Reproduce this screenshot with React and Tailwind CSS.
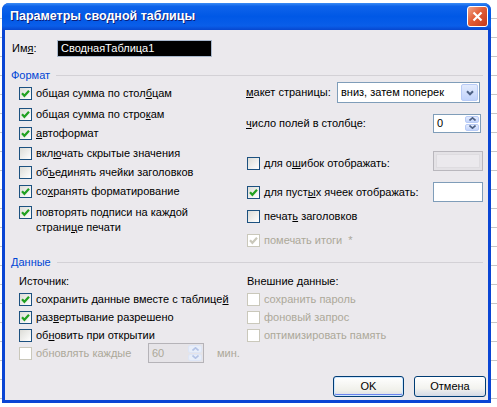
import React from "react";

function Box({ checked, disabled }) {
  return (
    <span
      className={`w-[13px] h-[13px] shrink-0 border flex items-center justify-center ${
        disabled
          ? "border-[#cac8bb] bg-white"
          : "border-[#1c5180] bg-[linear-gradient(135deg,#dcdcd7,#ffffff)]"
      }`}
    >
      {checked && (
        <svg width="9" height="9" viewBox="0 0 9 9">
          <path
            d="M1 4.2 L3.4 6.8 L8 1.8"
            fill="none"
            stroke={disabled ? "#cac8bb" : "#21a121"}
            strokeWidth="2.2"
          />
        </svg>
      )}
    </span>
  );
}

function Check({ checked, disabled, children, className = "" }) {
  return (
    <div className={`flex items-center ${className}`}>
      <Box checked={checked} disabled={disabled} />
      <span className={`ml-[4px] whitespace-nowrap ${disabled ? "text-[#aca899]" : ""}`}>
        {children}
      </span>
    </div>
  );
}

function Arrow({ up, pale }) {
  return (
    <svg width="7" height="4" viewBox="0 0 7 4">
      <path
        d={up ? "M0.5 3.5 L3.5 0.8 L6.5 3.5" : "M0.5 0.5 L3.5 3.2 L6.5 0.5"}
        fill="none"
        stroke={pale ? "#b4c3e6" : "#4d6185"}
        strokeWidth="1.6"
      />
    </svg>
  );
}

function SpinButtons({ pale }) {
  return (
    <div className="flex flex-col w-[15px] h-full gap-px py-px pr-px">
      {[true, false].map((up) => (
        <div
          key={String(up)}
          className={`flex-1 rounded-[2px] border flex items-center justify-center ${
            pale
              ? "border-[#dde5f6] bg-[#e8eef9]"
              : "border-[#b8cbf6] bg-[linear-gradient(#e3ebfd,#c3d4fb)]"
          }`}
        >
          <Arrow up={up} pale={pale} />
        </div>
      ))}
    </div>
  );
}

function Group({ title }) {
  return (
    <div className="flex items-center h-[14px] pl-[6px] pr-[5px]">
      <span className="text-[#0046d5]">{title}</span>
      <div className="flex-1 h-px bg-[#d3d1d6] ml-[6px]" />
    </div>
  );
}

export default function App() {
  return (
    <div
      className="w-[497px] h-[407px] overflow-hidden bg-white bg-[repeating-linear-gradient(to_bottom,transparent_0,transparent_18px,#c6c6c6_18px,#c6c6c6_19px)] pl-[2px] pt-[3px] text-[11px] text-black"
      style={{ fontFamily: '"Liberation Sans", Arial, sans-serif' }}
    >
      <div className="w-[489px] h-[400px] flex flex-col rounded-t-[7px] bg-[#0a45d4]">
        {/* Title bar */}
        <div className="h-[27px] shrink-0 rounded-t-[7px] bg-[linear-gradient(#3b8cf5_0%,#0e63ea_12%,#0058e6_50%,#0a5ee9_85%,#0747cf_100%)] flex items-center justify-between pl-[8px] pr-[3px]">
          <span className="text-white font-bold text-[12.5px] [text-shadow:1px_1px_0_#0a1e7a]">
            Параметры сводной таблицы
          </span>
          <div className="w-[21px] h-[21px] rounded-[3px] border border-white bg-[linear-gradient(135deg,#f0a78c,#e25d36_45%,#c4391a)] flex items-center justify-center">
            <svg width="11" height="11" viewBox="0 0 11 11">
              <path d="M1.5 1.5 L9.5 9.5 M9.5 1.5 L1.5 9.5" stroke="white" strokeWidth="2.2" />
            </svg>
          </div>
        </div>

        {/* Body */}
        <div className="flex-1 mx-[3px] mb-[3px] bg-[#ebe9ed] flex flex-col">
          <div className="flex items-center h-[17px] mt-[10px] pl-[7px]">
            <span className="w-[45px]">
              Им<u>я</u>:
            </span>
            <div className="w-[155px] h-[17px] border border-[#a9b8cc] bg-black text-white pl-[3px] flex items-center">
              СводнаяТаблица1
            </div>
          </div>

          <div className="mt-[11px]">
            <Group title="Формат" />
          </div>

          <div className="h-[173px] flex">
            <div className="w-[241px] pl-[14px] flex flex-col">
              <Check checked className="h-[22px]">
                общая сумма по стол<u>б</u>цам
              </Check>
              <Check checked className="h-[20px]">
                общая сумма по стро<u>к</u>ам
              </Check>
              <Check checked className="h-[19px]">
                <u>а</u>втоформат
              </Check>
              <Check className="h-[20px]">
                вкл<u>ю</u>чать скрытые значения
              </Check>
              <Check className="h-[18px]">
                об<u>ъ</u>единять ячейки заголовков
              </Check>
              <Check checked className="h-[20px]">
                со<u>х</u>ранять форматирование
              </Check>
              <div className="flex items-start pt-[5px]">
                <Box checked />
                <div className="ml-[4px] -mt-[1px] leading-[15px]">
                  повторять подписи на каждой
                  <br />
                  страни<u>ц</u>е печати
                </div>
              </div>
            </div>

            <div className="w-[237px] flex flex-col">
              <div className="h-[21px] flex items-center justify-between pr-[3px]">
                <span>
                  <u>м</u>акет страницы:
                </span>
                <div className="w-[143px] h-[21px] border border-[#7f9db9] bg-white flex items-center">
                  <span className="flex-1 pl-[3px]">вниз, затем поперек</span>
                  <div className="w-[17px] h-[17px] mr-px rounded-[2px] border border-[#b8cbf6] bg-[linear-gradient(#e3ebfd,#c1d3fb)] flex items-center justify-center">
                    <svg width="8" height="6" viewBox="0 0 8 6">
                      <path d="M1 1.2 L4 4.3 L7 1.2" fill="none" stroke="#4d6185" strokeWidth="2" />
                    </svg>
                  </div>
                </div>
              </div>

              <div className="h-[20px] mt-[10px] flex items-center justify-between pr-[2px]">
                <span>
                  <u>ч</u>исло полей в столбце:
                </span>
                <div className="w-[48px] h-[19px] border border-[#7f9db9] bg-white flex items-center">
                  <span className="flex-1 pl-[3px]">0</span>
                  <SpinButtons />
                </div>
              </div>

              <div className="h-[20px] mt-[18px] flex items-center justify-between">
                <Check className="ml-px mt-[4px]">
                  для о<u>ш</u>ибок отображать:
                </Check>
                <div className="w-[50px] h-[20px] border border-[#b9b7bd] bg-[#e4e2e6] p-[2px]">
                  <div className="w-full h-full bg-[#ebe9ed] border border-[#dedce0]" />
                </div>
              </div>

              <div className="h-[20px] mt-[11px] flex items-center justify-between">
                <Check checked className="ml-px">
                  для пуст<u>ы</u>х ячеек отображать:
                </Check>
                <div className="w-[50px] h-[20px] border border-[#7f9db9] bg-white" />
              </div>

              <Check className="h-[18px] mt-[5px] ml-px">
                печат<u>ь</u> заголовков
              </Check>
              <Check checked disabled className="h-[18px] mt-[6px] ml-px">
                помечать итоги&nbsp;&nbsp;*
              </Check>
            </div>
          </div>

          <Group title="Данные" />

          <div className="mt-[3px] flex">
            <div className="w-[241px] pl-[14px] flex flex-col">
              <div className="h-[18px] flex items-center">Источник:</div>
              <Check checked className="h-[18px]">
                сохранить данные вместе с таблице<u>й</u>
              </Check>
              <Check checked className="h-[18px]">
                раз<u>в</u>ертывание разрешено
              </Check>
              <Check className="h-[18px]">
                об<u>н</u>овить при открытии
              </Check>
              <div className="h-[18px] flex items-center">
                <Check disabled className="w-[129px]">
                  обновлять каждые
                </Check>
                <div className="w-[56px] h-[20px] border border-[#b5b3b8] bg-[#e6e4e8] flex items-center">
                  <span className="flex-1 pl-[3px] text-[#aca899]">60</span>
                  <SpinButtons pale />
                </div>
                <span className="ml-[13px] text-[#aca899]">мин.</span>
              </div>
            </div>
            <div className="flex flex-col pl-px">
              <div className="h-[18px] flex items-center">Внешние данные:</div>
              <Check disabled className="h-[18px]">
                сохранить пароль
              </Check>
              <Check disabled className="h-[18px]">
                фоновый запрос
              </Check>
              <Check disabled className="h-[18px]">
                оптимизировать память
              </Check>
            </div>
          </div>

          <div className="mt-[14px] flex justify-end gap-[10px] pr-[2px]">
            <button className="w-[71px] h-[21px] rounded-[3px] border border-[#003c74] bg-[linear-gradient(#ffffff,#f0f0ea_70%,#d6dbe6)] shadow-[inset_0_0_0_1px_#cee7ff,inset_0_-1px_0_1px_#6982ee] flex items-center justify-center">
              OK
            </button>
            <button className="w-[72px] h-[21px] rounded-[3px] border border-[#003c74] bg-[linear-gradient(#ffffff,#f3f3ef_60%,#d3d9e6)] flex items-center justify-center">
              Отмена
            </button>
          </div>
        </div>
      </div>
    </div>
  );
}
